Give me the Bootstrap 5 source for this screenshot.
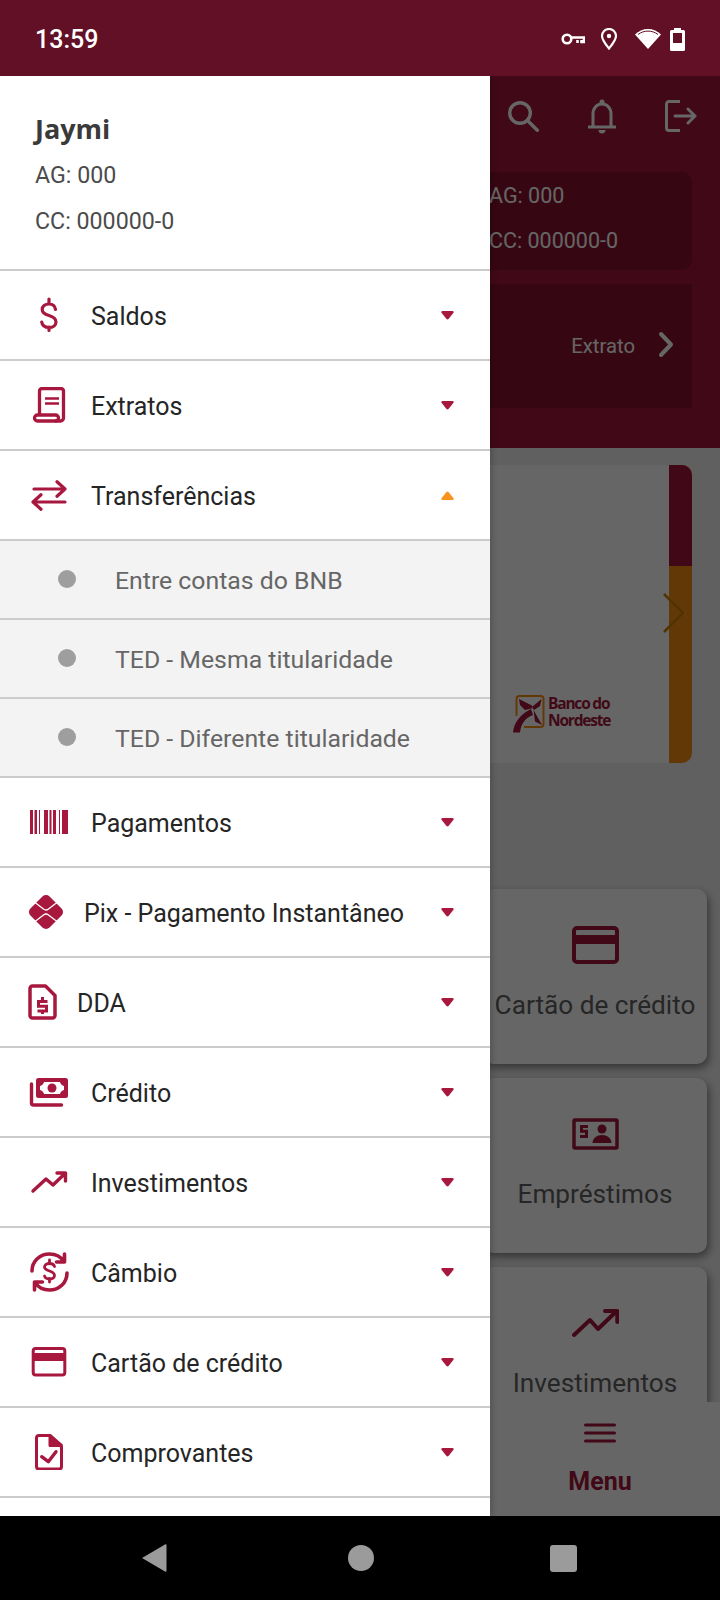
<!DOCTYPE html>
<html lang="pt-BR">
<head>
    <meta charset="UTF-8">
    <meta name="viewport" content="width=device-width, initial-scale=1.0">
    <title>Menu</title>
    <link href="https://cdn.jsdelivr.net/npm/bootstrap@5.3.0/dist/css/bootstrap.min.css" rel="stylesheet">
    <style>
        body {
            font-family: Roboto, "Liberation Sans", sans-serif;
            background: #000;
        }
        .phone {
            width: 720px;
            height: 1600px;
            overflow: hidden;
        }
        .status-bar {
            height: 76px;
            background: #621025;
            color: #fff;
            padding: 4px 35px 0 35px;
        }
        .status-time {
            font-size: 25px;
            font-weight: 500;
        }
        .status-icons { margin-top: -2px; }
        .status-icons svg { display: block; }
        .status-key { margin-right: 15px; margin-top: 1px; }
        .status-pin { margin-right: 17px; }
        .status-wifi { margin-right: 9px; }
        .screen {
            height: 1440px;
            background: #f0f0f0;
        }
        .scrim {
            inset: 0;
            background: rgba(0, 0, 0, .6);
        }

        /* pagina atras do menu */
        .app-top {
            height: 372px;
            background: #a3173a;
            padding: 0 28px 40px;
            color: #fff;
            font-size: 20.3px;
        }
        .app-icons {
            height: 96px;
            padding-bottom: 16px;
            gap: 49px;
            margin-right: -5px;
        }
        .top-panel {
            background: #87102d;
            border-radius: 10px;
        }
        .panel-info {
            height: 98px;
            margin-bottom: 14px;
            padding: 1px 0 0 461px;
            font-size: 21.5px;
            line-height: 45px;
        }
        .panel-extrato {
            height: 124px;
            padding-right: 18px;
            border-radius: 0;
            gap: 23px;
        }
        .extrato-arrow { margin-top: -3px; }
        .banner {
            height: 298px;
            margin: 17px 28px 126px;
            background: #fff;
            border-radius: 10px;
            overflow: hidden;
        }
        .banner-logo {
            padding: 0 0 30px 485px;
            color: #a3173a;
        }
        .logo-text {
            font-family: "Open Sans", sans-serif;
            font-size: 15.5px;
            font-weight: 700;
            line-height: 17px;
            letter-spacing: -1.2px;
            margin: 0 0 4px 3px;
        }
        .banner-strip {
            width: 23px;
            background: #f88c12;
        }
        .strip-top {
            height: 101px;
            background: #a3173a;
        }
        .banner-arrow {
            right: 8px;
            top: 127px;
        }
        .tile-list {
            width: 224px;
            margin-left: 483px;
            gap: 14px;
        }
        .tile {
            height: 175px;
            padding-top: 30px;
            background: #fff;
            border-radius: 10px;
            box-shadow: 2px 4px 8px rgba(0, 0, 0, .45);
            color: #5f5f5f;
            font-size: 26.2px;
            line-height: 32px;
            white-space: nowrap;
        }
        .tile-icon {
            margin-bottom: 18px;
            flex: none;
        }
        .bottom-nav {
            left: 0;
            right: 0;
            bottom: 0;
            height: 114px;
            padding: 21px 0 0 480px;
            background: #fff;
            color: #a3173a;
            font-size: 25px;
            font-weight: 700;
            line-height: 30px;
        }
        .nav-label { margin-top: 24px; }

        /* menu lateral */
        .drawer {
            left: 0;
            top: 0;
            bottom: 0;
            width: 490px;
            background: #fff;
            box-shadow: 2px 0 6px rgba(0, 0, 0, .2);
        }
        .drawer-head {
            height: 195px;
            padding: 35px 35px 0;
            color: #4b4b4b;
            font-size: 23.2px;
            border-bottom: 2px solid #ccc;
        }
        .drawer-name {
            font-family: "Open Sans", sans-serif;
            font-size: 27px;
            font-weight: 700;
            color: #3a3a3a;
            line-height: 36px;
            margin-bottom: 5px;
        }
        .drawer-line {
            line-height: 46px;
        }
        .menu-row {
            height: 90px;
            border-bottom: 2px solid #ccc;
            padding: 0 36px 0 0;
            font-size: 25px;
            color: #252525;
        }
        .menu-label { padding-top: 3px; }
        .menu-icon {
            width: 91px;
            flex: none;
            padding-left: 28px;
        }
        .menu-icon-short { width: 84px; }
        .menu-icon-dda { width: 77px; }
        .menu-row svg { display: block; }
        .menu-caret {
            margin-left: auto;
        }
        .sub-row {
            height: 79px;
            border-bottom: 2px solid #ccc;
            background: #f3f3f3;
            color: #666;
            font-size: 24.8px;
        }
        .sub-label { padding-top: 2px; }
        .sub-dot {
            width: 18px;
            height: 18px;
            border-radius: 50%;
            background: #9e9e9e;
            margin: -2px 39px 0 58px;
        }

        .nav-bar {
            height: 84px;
            background: #000;
            padding-left: 141px;
        }
        .nav-home {
            width: 26px;
            height: 26px;
            border-radius: 50%;
            background: #9b9b9b;
            margin-left: 181px;
        }
        .nav-recent {
            width: 27px;
            height: 27px;
            border-radius: 3px;
            background: #9b9b9b;
            margin-left: 176px;
        }
    </style>
</head>
<body>
<div class="phone d-flex flex-column">

    <!-- status bar -->
    <div class="status-bar d-flex align-items-center">
        <span class="status-time">13:59</span>
        <div class="status-icons ms-auto d-flex align-items-center">
            <svg class="status-key" width="24" height="15" viewBox="0 0 24 15" fill="none" stroke="#fff" stroke-width="2.6"><circle cx="6" cy="7" r="4.300"/><path d="M10.500 5.500H23V10h-2.500V8M16.500 8v3"/></svg>
            <svg class="status-pin" width="18" height="22" viewBox="0 0 18 22" fill="none" stroke="#fff" stroke-width="2.2"><path d="M9 20.500C5 15.500 2 12 2 8a7 7 0 0 1 14 0c0 4-3 7.500-7 12.500z"/><circle cx="9" cy="8" r="2.200" fill="#fff" stroke="none"/></svg>
            <svg class="status-wifi" width="26" height="22" viewBox="0 0 26 22"><path d="M13 21L0 6.500C3.500 3 8 1 13 1s9.500 2 13 5.500z" fill="#fff"/><path d="M3 6.500C6 4.200 9.400 3.100 13 3.100s7 1.100 10 3.400" fill="none" stroke="#621025" stroke-width="1"/></svg>
            <svg width="15" height="23" viewBox="0 0 15 23"><path d="M4 0h7v2h2.500a1.500 1.500 0 0 1 1.500 1.500V21.500a1.500 1.500 0 0 1-1.500 1.500h-12A1.500 1.500 0 0 1 0 21.500V3.500A1.500 1.500 0 0 1 1.500 2H4z" fill="#fff"/><rect x="3" y="5" width="9" height="10" fill="#621025"/></svg>
        </div>
    </div>

    <div class="screen position-relative overflow-hidden">

        <!-- pagina atras do menu -->
        <div class="app-top">
            <div class="app-icons d-flex align-items-center justify-content-end">
                <svg width="31" height="31" viewBox="0 0 31 31" fill="none" stroke="#fff" stroke-width="3.400"><circle cx="12" cy="12" r="10.300"/><path d="M19.500 19.500L29.300 29.300" stroke-linecap="round"/></svg>
                <svg width="28" height="35" viewBox="0 0 28 35" fill="none" stroke="#fff" stroke-width="3"><path d="M5 27V15C5 9 9 5 14 5s9 4 9 10v12"/><path d="M0 28h28"/><circle cx="14" cy="3" r="2.500" fill="#fff" stroke="none"/><path d="M10.500 31h7a3.500 3.500 0 0 1-7 0z" fill="#fff" stroke="none"/></svg>
                <svg width="32" height="32" viewBox="0 0 32 32" fill="none" stroke="#fff" stroke-width="3"><path d="M15 1.500H4a2.500 2.500 0 0 0-2.500 2.500v24A2.500 2.500 0 0 0 4 30.500h11"/><path d="M10 16h20M23 9l7 7-7 7" stroke-linecap="round" stroke-linejoin="round"/></svg>
            </div>
            <div class="top-panel panel-info">AG: 000<br>CC: 000000-0</div>
            <div class="top-panel panel-extrato d-flex align-items-center justify-content-end">
                <span>Extrato</span>
                <svg class="extrato-arrow" width="16" height="27" viewBox="0 0 16 27" fill="none" stroke="#fff" stroke-width="4" stroke-linecap="round" stroke-linejoin="round"><path d="M3 3l10 10.500L3 24"/></svg>
            </div>
        </div>

        <div class="banner position-relative d-flex">
            <div class="banner-logo flex-grow-1 d-flex align-items-end">
                <svg width="32" height="39" viewBox="0 0 32 39">
                    <path d="M3.500 22V5a3 3 0 0 1 3-3h21a3 3 0 0 1 3 3v25a3 3 0 0 1-3 3H11" fill="none" stroke="#f88c12" stroke-width="2"/>
                    <path d="M6 5L19 11.500 20 14 12 16 7 11zM28.500 5L19 13 21 16 27 12zM20.500 16L29 31 22 27.500z" fill="#a3173a"/>
                    <path d="M18 15C8 20 1 28 0 38.500H7C8 30 12 24 20 21z" fill="#a3173a"/>
                </svg>
                <span class="logo-text">Banco do<br>Nordeste</span>
            </div>
            <div class="banner-strip d-flex flex-column"><div class="strip-top"></div></div>
            <svg class="banner-arrow position-absolute" width="22" height="42" viewBox="0 0 22 42" fill="none" stroke="#c98200" stroke-width="2.500"><path d="M2 2l19 19L2 40"/></svg>
        </div>

        <div class="tile-list d-flex flex-column">
            <div class="tile d-flex flex-column align-items-center">
                <svg class="tile-icon" width="47" height="52" viewBox="0 0 47 52" fill="none" stroke="#a3173a" stroke-width="4"><rect x="2" y="9" width="43" height="34" rx="3"/><path d="M2 20.500h43" stroke-width="9"/></svg>
                <span>Cartão de crédito</span>
            </div>
            <div class="tile d-flex flex-column align-items-center">
                <svg class="tile-icon" width="47" height="52" viewBox="0 0 47 52" fill="none" stroke="#a3173a" stroke-width="3.500"><rect x="2" y="12" width="43" height="28" rx="1"/><path d="M16 18.500H9.500v4.800h5V28.500H8" stroke-width="3"/><circle cx="30" cy="21" r="4.500" fill="#a3173a" stroke="none"/><path d="M20.500 35c0-5 4.500-8 9.500-8s9.500 3 9.500 8z" fill="#a3173a" stroke="none"/></svg>
                <span>Empréstimos</span>
            </div>
            <div class="tile d-flex flex-column align-items-center">
                <svg class="tile-icon" width="47" height="52" viewBox="0 0 47 52" fill="none" stroke="#a3173a" stroke-width="4" stroke-linecap="round" stroke-linejoin="round"><path d="M2 38l16-15 8 9L44.700 14M33 14h12.300v11"/></svg>
                <span>Investimentos</span>
            </div>
        </div>

        <div class="bottom-nav position-absolute d-flex flex-column align-items-center">
            <svg width="32" height="20" viewBox="0 0 32 20" fill="none" stroke="#a3173a" stroke-width="3" stroke-linecap="round"><path d="M1.500 2h29M1.500 10h29M1.500 18h29"/></svg>
            <span class="nav-label">Menu</span>
        </div>

        <div class="scrim position-absolute"></div>

        <!-- menu lateral -->
        <div class="drawer position-absolute">
            <div class="drawer-head">
                <div class="drawer-name">Jaymi</div>
                <div class="drawer-line">AG: 000</div>
                <div class="drawer-line">CC: 000000-0</div>
            </div>

            <div class="menu-row d-flex align-items-center">
                <div class="menu-icon"><svg width="40" height="36" viewBox="0 0 40 36" fill="none" stroke="#a8173e" stroke-width="3.200" stroke-linecap="round"><path d="M27.500 12.500C27 9 24.500 7 21 7c-4 0-6.800 2.300-6.800 5.500 0 3.500 3 5 6.800 6 4 1.200 7 2.500 7 6.500 0 3.200-3 5.500-7 5.500-4 0-6.800-2-7.300-5.500M21 2v5M21 30v3.500"/></svg></div>
                <span class="menu-label">Saldos</span>
                <svg class="menu-caret" width="13" height="9" viewBox="0 0 13 9"><path d="M1.500 0h10c1 0 1.500 1 1 1.800L7.500 8c-.500.500-1.500.500-2 0L.5 1.800C0 1 .5 0 1.500 0z" fill="#a8173e"/></svg>
            </div>
            <div class="menu-row d-flex align-items-center">
                <div class="menu-icon"><svg width="38" height="36" viewBox="0 0 38 36" fill="none" stroke="#a8173e" stroke-width="3.300" stroke-linejoin="round"><path d="M11.500 27V4A2.500 2.500 0 0 1 14 1.500h19A2.500 2.500 0 0 1 35.500 4v27a3 3 0 0 1-3 3H27"/><path d="M17 11.500h14M17 16.500h14" stroke-width="2.600"/><rect x="6.500" y="28" width="24" height="6" rx="3"/></svg></div>
                <span class="menu-label">Extratos</span>
                <svg class="menu-caret" width="13" height="9" viewBox="0 0 13 9"><path d="M1.500 0h10c1 0 1.500 1 1 1.800L7.500 8c-.500.500-1.500.500-2 0L.5 1.800C0 1 .5 0 1.500 0z" fill="#a8173e"/></svg>
            </div>
            <div class="menu-row d-flex align-items-center">
                <div class="menu-icon"><svg width="40" height="31" viewBox="0 0 40 31" fill="none" stroke="#a8173e" stroke-width="3.200" stroke-linecap="round" stroke-linejoin="round"><path d="M6 9h31M29 1.800L37 9l-8 7.200"/><path d="M37 22H6M13 14.800L5 22l8 7.200"/></svg></div>
                <span class="menu-label">Transferências</span>
                <svg class="menu-caret" width="13" height="9" viewBox="0 0 13 9"><path d="M1.500 9h10c1 0 1.500-1 1-1.800L7.500 1c-.500-.500-1.500-.500-2 0L.5 7.200C0 8 .5 9 1.500 9z" fill="#f7931e"/></svg>
            </div>

            <div class="sub-row d-flex align-items-center"><span class="sub-dot"></span><span class="sub-label">Entre contas do BNB</span></div>
            <div class="sub-row d-flex align-items-center"><span class="sub-dot"></span><span class="sub-label">TED - Mesma titularidade</span></div>
            <div class="sub-row d-flex align-items-center"><span class="sub-dot"></span><span class="sub-label">TED - Diferente titularidade</span></div>

            <div class="menu-row d-flex align-items-center">
                <div class="menu-icon"><svg width="41" height="26" viewBox="-1 0 41 26" fill="#a8173e"><rect x="1" y="1" width="3" height="24"/><rect x="5.500" y="1" width="2.500" height="24"/><rect x="10" y="1" width="1" height="24"/><rect x="15" y="1" width="4" height="24"/><rect x="20.500" y="1" width="2" height="24"/><rect x="24" y="1" width="3" height="24"/><rect x="30" y="1" width="1" height="24"/><rect x="33" y="1" width="6" height="24"/></svg></div>
                <span class="menu-label">Pagamentos</span>
                <svg class="menu-caret" width="13" height="9" viewBox="0 0 13 9"><path d="M1.500 0h10c1 0 1.500 1 1 1.800L7.500 8c-.500.500-1.500.500-2 0L.5 1.800C0 1 .5 0 1.500 0z" fill="#a8173e"/></svg>
            </div>
            <div class="menu-row d-flex align-items-center">
                <div class="menu-icon menu-icon-short"><svg width="36" height="36" viewBox="0 0 36 36"><rect x="4.500" y="4.500" width="27" height="27" rx="5" transform="rotate(45 18 18)" fill="#a8173e"/><path d="M7 8.500L15.500 15c1.500 1.200 3.500 1.200 5 0L29 8.500M7 27.500L15.500 21c1.500-1.200 3.500-1.200 5 0L29 27.500" fill="none" stroke="#fff" stroke-width="1.300"/></svg></div>
                <span class="menu-label">Pix - Pagamento Instantâneo</span>
                <svg class="menu-caret" width="13" height="9" viewBox="0 0 13 9"><path d="M1.500 0h10c1 0 1.500 1 1 1.800L7.500 8c-.500.500-1.500.500-2 0L.5 1.800C0 1 .5 0 1.500 0z" fill="#a8173e"/></svg>
            </div>
            <div class="menu-row d-flex align-items-center">
                <div class="menu-icon menu-icon-dda"><svg width="29" height="36" viewBox="0 0 29 36" fill="none" stroke="#a8173e" stroke-width="3.500" stroke-linejoin="round"><path d="M4.500 2H17.500L27 11.500V31.500a2.500 2.500 0 0 1-2.500 2.500h-20A2.500 2.500 0 0 1 2 31.500V4.500A2.500 2.500 0 0 1 4.500 2z"/><path d="M19.500 17.500h-9v4.700h8v4.800h-9M14.500 13v4M14.500 27v3" stroke-width="3" stroke-linejoin="miter"/></svg></div>
                <span class="menu-label">DDA</span>
                <svg class="menu-caret" width="13" height="9" viewBox="0 0 13 9"><path d="M1.500 0h10c1 0 1.500 1 1 1.800L7.500 8c-.500.500-1.500.500-2 0L.5 1.800C0 1 .5 0 1.500 0z" fill="#a8173e"/></svg>
            </div>
            <div class="menu-row d-flex align-items-center">
                <div class="menu-icon"><svg width="41" height="30" viewBox="-1.500 0 41 30" fill="none"><path d="M2 7v19a2 2 0 0 0 2 2h28" stroke="#a8173e" stroke-width="3.400" stroke-linecap="round"/><rect x="6.500" y="1" width="32" height="20" rx="2.500" fill="#a8173e"/><path d="M14.500 5c-.500 2-2 3.500-4 4v4c2 .5 3.500 2 4 4h16c.500-2 2-3.500 4-4V9c-2-.500-3.500-2-4-4z" fill="#fff"/><circle cx="22.500" cy="11" r="4.500" fill="#a8173e"/></svg></div>
                <span class="menu-label">Crédito</span>
                <svg class="menu-caret" width="13" height="9" viewBox="0 0 13 9"><path d="M1.500 0h10c1 0 1.500 1 1 1.800L7.500 8c-.500.500-1.500.500-2 0L.5 1.800C0 1 .5 0 1.500 0z" fill="#a8173e"/></svg>
            </div>
            <div class="menu-row d-flex align-items-center">
                <div class="menu-icon"><svg width="40" height="24" viewBox="0 0 40 24" fill="none" stroke="#a8173e" stroke-width="3.400" stroke-linecap="round" stroke-linejoin="round"><path d="M5 21L18 9l7 6L37 3.500M29 3h8.500v8"/></svg></div>
                <span class="menu-label">Investimentos</span>
                <svg class="menu-caret" width="13" height="9" viewBox="0 0 13 9"><path d="M1.500 0h10c1 0 1.500 1 1 1.800L7.500 8c-.500.500-1.500.500-2 0L.5 1.800C0 1 .5 0 1.500 0z" fill="#a8173e"/></svg>
            </div>
            <div class="menu-row d-flex align-items-center">
                <div class="menu-icon"><svg width="42" height="40" viewBox="-2 0 42 40" fill="none" stroke="#a8173e" stroke-width="3.600" stroke-linecap="round" stroke-linejoin="round"><path d="M2 19C2 9 10 2 19.500 2c6 0 11 2.500 14 7M34.500 2v8h-8"/><path d="M37 21c0 10-8 17-17.500 17-6 0-11-2.500-14-7M4.500 38v-8h8"/><path d="M24.500 14.500c-.500-2-2.500-3-5-3-2.800 0-5 1.500-5 3.500s2.200 3 5 4 5 2.500 5 4.500-2.200 3.500-5 3.500c-2.500 0-4.500-1-5-3M19.500 8v3.500M19.500 26.500v3.500" stroke-width="2.800"/></svg></div>
                <span class="menu-label">Câmbio</span>
                <svg class="menu-caret" width="13" height="9" viewBox="0 0 13 9"><path d="M1.500 0h10c1 0 1.500 1 1 1.800L7.500 8c-.500.500-1.500.500-2 0L.5 1.800C0 1 .5 0 1.500 0z" fill="#a8173e"/></svg>
            </div>
            <div class="menu-row d-flex align-items-center">
                <div class="menu-icon"><svg width="40" height="30" viewBox="0 0 40 30" fill="none" stroke="#a8173e" stroke-width="3"><rect x="5.200" y="1.500" width="31.600" height="26.500" rx="2.500"/><path d="M4 10h34" stroke-width="8"/></svg></div>
                <span class="menu-label">Cartão de crédito</span>
                <svg class="menu-caret" width="13" height="9" viewBox="0 0 13 9"><path d="M1.500 0h10c1 0 1.500 1 1 1.800L7.500 8c-.500.500-1.500.500-2 0L.5 1.800C0 1 .5 0 1.500 0z" fill="#a8173e"/></svg>
            </div>
            <div class="menu-row d-flex align-items-center">
                <div class="menu-icon"><svg width="36" height="36" viewBox="0 0 36 36" fill="none" stroke="#a8173e" stroke-width="3" stroke-linejoin="round"><path d="M11 1.500h11L33.500 13v19.500A2.500 2.500 0 0 1 31 35H11a2.500 2.500 0 0 1-2.500-2.500V4A2.500 2.500 0 0 1 11 1.500z"/><path d="M22 1.500V11.500H33.500z" fill="#a8173e"/><path d="M13.700 22.700l6.600 5L28 17.700" stroke-width="3.400" stroke-linecap="round"/></svg></div>
                <span class="menu-label">Comprovantes</span>
                <svg class="menu-caret" width="13" height="9" viewBox="0 0 13 9"><path d="M1.500 0h10c1 0 1.500 1 1 1.800L7.500 8c-.500.500-1.500.500-2 0L.5 1.800C0 1 .5 0 1.500 0z" fill="#a8173e"/></svg>
            </div>
        </div>
    </div>

    <!-- navigation bar -->
    <div class="nav-bar d-flex align-items-center">
        <svg width="26" height="30" viewBox="0 0 26 30"><path d="M1 15L24 1.500c1-.5 1.500 0 1.500 1V27.500c0 1-.5 1.500-1.500 1z" fill="#9b9b9b"/></svg>
        <span class="nav-home"></span>
        <span class="nav-recent"></span>
    </div>
</div>
<script src="https://cdn.jsdelivr.net/npm/bootstrap@5.3.0/dist/js/bootstrap.bundle.min.js"></script>
</body>
</html>
